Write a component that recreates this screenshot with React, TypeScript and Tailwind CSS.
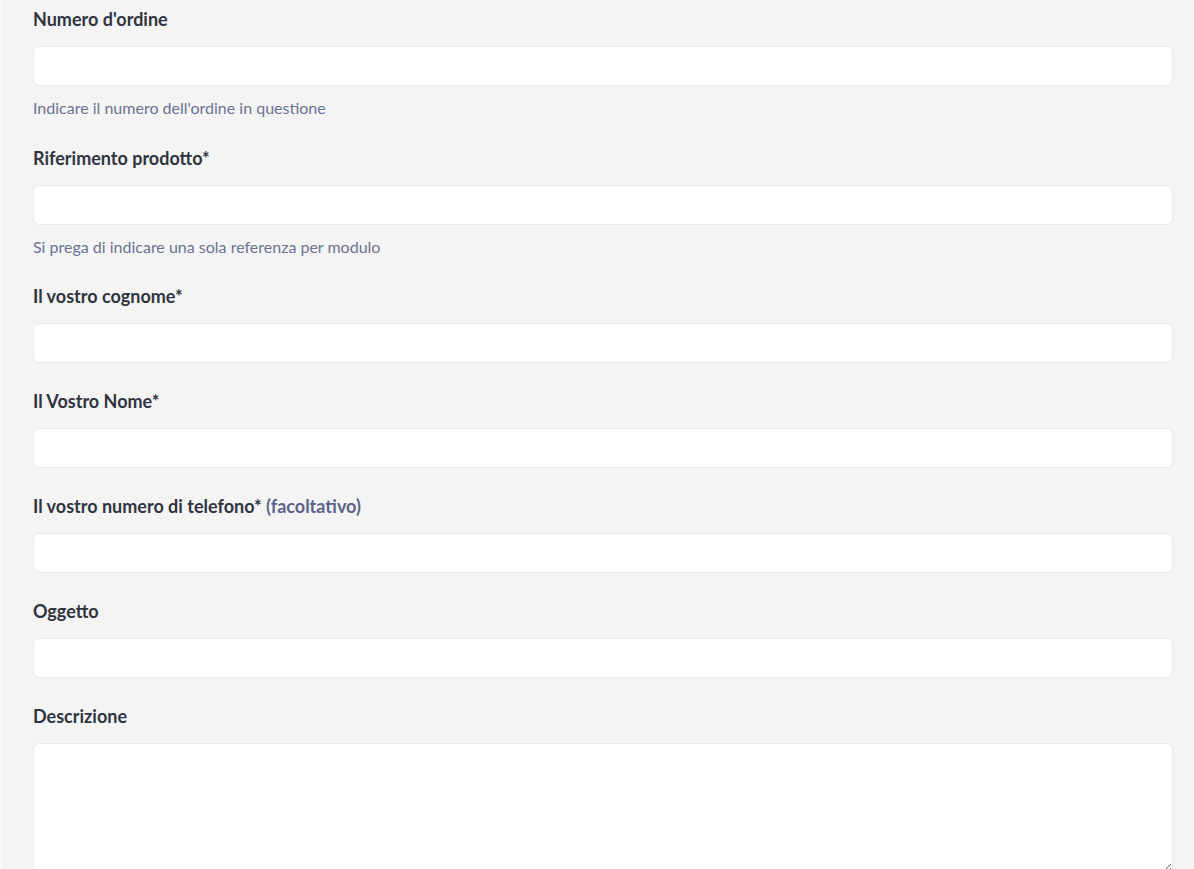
import React from 'react';

type Field = {
  label: string;
  optional?: string;
  help?: string;
  textarea?: boolean;
};

const fields: Field[] = [
  { label: "Numero d'ordine", help: "Indicare il numero dell'ordine in questione" },
  { label: 'Riferimento prodotto*', help: 'Si prega di indicare una sola referenza per modulo' },
  { label: 'Il vostro cognome*' },
  { label: 'Il Vostro Nome*' },
  { label: 'Il vostro numero di telefono*', optional: '(facoltativo)' },
  { label: 'Oggetto' },
  { label: 'Descrizione', textarea: true },
];

function FormField({ field }: { field: Field }) {
  return (
    <div className="flex flex-col">
      <label className="text-[18px] leading-[18px] font-bold text-[#30343f] mb-[18px]">
        {field.label}
        {field.optional && <span className="text-[#5d6388]"> {field.optional}</span>}
      </label>
      {field.textarea ? (
        <textarea className="w-full h-[130px] rounded-[6px] bg-white border border-[#e9e9e9] outline-none" />
      ) : (
        <input type="text" className="w-full h-[40px] rounded-[6px] bg-white border border-[#e9e9e9] outline-none" />
      )}
      {field.help && (
        <p className="mt-[12px] mb-[1px] text-[16px] leading-[20.5px] text-[#6c7391]">{field.help}</p>
      )}
    </div>
  );
}

export default function App() {
  return (
    <div
      className="min-h-screen bg-[#f4f4f4] border-l-2 border-[#f8f8f8] pl-[31px] pr-[21px] pt-[10px] pb-10 flex flex-col gap-[29px] overflow-hidden h-[869px]"
      style={{ fontFamily: 'Lato, "Open Sans", sans-serif' }}
    >
      {fields.map((f) => (
        <FormField key={f.label} field={f} />
      ))}
    </div>
  );
}
